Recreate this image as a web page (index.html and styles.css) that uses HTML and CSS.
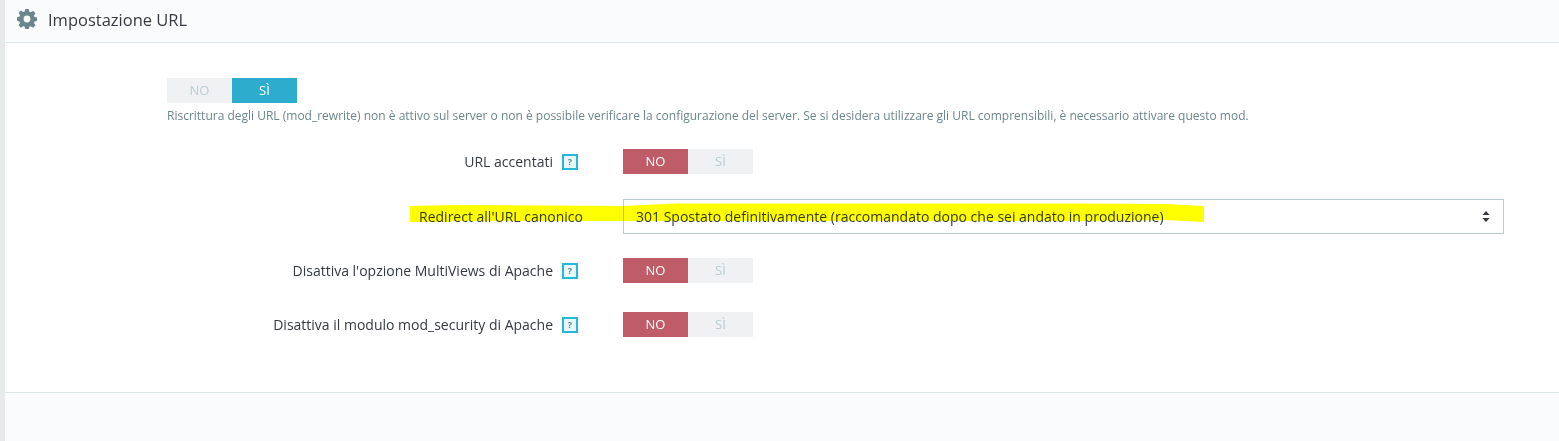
FILE: index.html
```html
<!DOCTYPE html>
<html lang="it">
<head>
    <meta charset="UTF-8">
    <title>Impostazione URL</title>
    <link rel="stylesheet" href="styles.css">
</head>
<body>
    <div class="panel">
        <div class="panel-heading">
            <svg class="gear" viewBox="0 0 20 20"><path fill-rule="evenodd" d="M8.2 0h3.6l.5 2.6 1.5.6 2.2-1.5 2.5 2.5-1.5 2.2.6 1.5 2.4.5v3.6l-2.4.5-.6 1.5 1.5 2.2-2.5 2.5-2.2-1.5-1.5.6-.5 2.6H8.2l-.5-2.6-1.5-.6-2.2 1.5-2.5-2.5 1.5-2.2-.6-1.5L0 11.8V8.2l2.4-.5.6-1.5-1.5-2.2L4 1.5l2.2 1.5 1.5-.6zM10 6.6a3.4 3.4 0 1 0 0 6.8 3.4 3.4 0 0 0 0-6.8z"/></svg>
            <h1>Impostazione URL</h1>
        </div>
        <div class="panel-body">
            <div class="top-option">
                <div class="toggle">
                    <span class="toggle-off">NO</span>
                    <span class="toggle-on">SÌ</span>
                </div>
                <p class="help-text">Riscrittura degli URL (mod_rewrite) non è attivo sul server o non è possibile verificare la configurazione del server. Se si desidera utilizzare gli URL comprensibili, è necessario attivare questo mod.</p>
            </div>

            <div class="row row-first">
                <label>URL accentati<span class="help">?</span></label>
                <div class="toggle">
                    <span class="toggle-no">NO</span>
                    <span class="toggle-off">SÌ</span>
                </div>
            </div>

            <div class="row row-select">
                <label>Redirect all'URL canonico</label>
                <div class="select">
                    <span>301 Spostato definitivamente (raccomandato dopo che sei andato in produzione)</span>
                    <svg class="sort" viewBox="0 0 8 11"><path d="M4 0l3.6 4H.4zM4 11L.4 7h7.2z"/></svg>
                </div>
            </div>

            <div class="row">
                <label>Disattiva l'opzione MultiViews di Apache<span class="help">?</span></label>
                <div class="toggle">
                    <span class="toggle-no">NO</span>
                    <span class="toggle-off">SÌ</span>
                </div>
            </div>

            <div class="row">
                <label>Disattiva il modulo mod_security di Apache<span class="help">?</span></label>
                <div class="toggle">
                    <span class="toggle-no">NO</span>
                    <span class="toggle-off">SÌ</span>
                </div>
            </div>
        </div>
        <div class="panel-footer"></div>
    </div>

    <!-- evidenziatore giallo sopra lo screenshot -->
    <svg class="marker" viewBox="0 0 1559 441"><path d="M410 206L453 205 622 206 677 203.5 1075 203.5 1165 204 1204 206 1204 222 1165 220 1100 221 622 221 453 221 449 222 410 222z"/></svg>
</body>
</html>
```

FILE: styles.css
```css
html, body {
    height: 100%;
}
body {
    margin: 0;
    background: #fff;
    font-family: 'Open Sans', sans-serif;
    font-size: 14px;
    color: #363a41;
}
.panel {
    height: 100%;
    box-sizing: border-box;
    border-left: 5px solid #e6eaeb;
    display: flex;
    flex-direction: column;
}
.panel-heading {
    height: 42px;
    display: flex;
    align-items: center;
    padding-left: 12px;
    background: #fafbfc;
    border-bottom: 1px solid #dbe6e9;
}
.gear {
    width: 20px;
    height: 20px;
    fill: #6c868e;
    margin: 0 11px 4px 0;
}
h1 {
    margin: 0 0 4px;
    font-size: 16.5px;
    font-weight: 400;
}
.panel-body {
    height: 349px;
    box-sizing: border-box;
    padding-top: 35px;
}
.top-option {
    margin: 0 0 26px 162px;
}
.help-text {
    margin: 5px 0 0;
    font-size: 12px;
    line-height: 15px;
    color: #6c868e;
}
.toggle {
    display: flex;
    width: 130px;
    height: 25px;
    line-height: 25px;
    text-align: center;
    font-size: 13px;
}
.toggle span {
    flex: 1;
}
.toggle-off {
    background: #eff1f2;
    color: #bbcdd2;
}
.toggle-on {
    background: #2eacce;
    color: #fff;
}
.toggle-no {
    background: #c05c67;
    color: #fff;
}
.row {
    display: grid;
    grid-template-columns: 578px 881px;
    column-gap: 40px;
    align-items: center;
    margin-bottom: 29px;
}
.row-first {
    margin-bottom: 25px;
}
.row-select {
    margin-bottom: 24px;
}
label {
    display: flex;
    justify-content: flex-end;
    align-items: center;
    white-space: pre;
}
.help {
    box-sizing: border-box;
    width: 16px;
    height: 16px;
    margin: 1px 5px 0 9px;
    border: 2px solid #25b9d7;
    background: #e8f7fa;
    color: #6c868e;
    font-size: 9px;
    font-weight: 700;
    line-height: 12px;
    text-align: center;
}
.select {
    box-sizing: border-box;
    height: 35px;
    display: flex;
    justify-content: space-between;
    align-items: center;
    padding: 0 12px;
    border: 1px solid #bbcdd2;
}
.sort {
    width: 8px;
    height: 11px;
    margin-right: 1px;
    fill: #363a41;
}
.panel-footer {
    flex: 1;
    background: #fafbfc;
    border-top: 1px solid #dbe6e9;
}
.marker {
    position: absolute;
    left: 0;
    top: 0;
    width: 1559px;
    height: 441px;
    fill: #ffff00;
    mix-blend-mode: multiply;
    pointer-events: none;
}
```
